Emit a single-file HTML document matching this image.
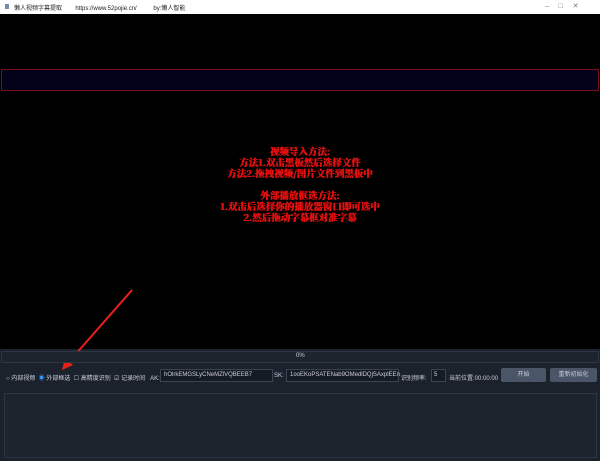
<!DOCTYPE html><html><head><meta charset="utf-8"><style>
body{margin:0;width:600px;height:461px;overflow:hidden;background:#1b222c;font-family:"Liberation Sans","Noto Sans CJK SC",sans-serif;position:relative}
.a{position:absolute}
.t{font-size:6px;color:#ccd;}
</style></head><body>
<div class="a" style="left:0;top:0;width:600px;height:14px;background:#fff"></div>
<div class="a" style="left:5px;top:4px;width:4px;height:5px;background:#7788aa"></div>
<div class="a" style="left:14px;top:3px;font-size:6px;color:#222;white-space:nowrap">懒人视频字幕提取&nbsp;&nbsp;&nbsp;&nbsp;&nbsp;&nbsp;&nbsp;&nbsp;https://www.52pojie.cn/&nbsp;&nbsp;&nbsp;&nbsp;&nbsp;&nbsp;&nbsp;&nbsp;&nbsp;&nbsp;by:懒人智能</div>
<div class="a" style="left:545px;top:2px;font-size:7px;color:#777">–&nbsp;&nbsp;&nbsp;&nbsp;&nbsp;□&nbsp;&nbsp;&nbsp;&nbsp;&nbsp;✕</div>
<div class="a" style="left:0;top:14px;width:600px;height:335px;background:#000"></div>
<div class="a" style="left:1px;top:69px;width:596px;height:20px;border:1px solid #7a0d1c;background:#02031a"></div>
<div class="a" style="left:0;top:146px;width:600px;text-align:center;color:#e01010;font-weight:bold;font-family:'Noto Serif CJK SC',serif;font-size:9.5px;line-height:11px;text-shadow:0.5px 0 0 #e01010,-0.3px 0 0 #e01010">视频导入方法:<br>方法1.双击黑板然后选择文件<br>方法2.拖拽视频/图片文件到黑板中<br><br>外部播放框选方法:<br>1.双击后选择你的播放器窗口即可选中<br>2.然后拖动字幕框对准字幕</div>
<svg class="a" style="left:60px;top:288px" width="75" height="84"><line x1="72" y1="2" x2="7" y2="76" stroke="#e8201a" stroke-width="2"/><polygon points="2,82 5,70 13,77" fill="#e8201a"/></svg>
<div class="a" style="left:1px;top:351px;width:596px;height:10px;border:1px solid #2d3744;background:#1d242e"></div>
<div class="a t" style="left:296px;top:353px">0%</div>
<div class="a t" style="left:6px;top:373px;white-space:nowrap">○ 内部视频&nbsp;&nbsp;<span style="color:#39f">◉</span> 外部框选&nbsp;&nbsp;☐ 高精度识别&nbsp;&nbsp;☑ 记录时间&nbsp;&nbsp;&nbsp;AK:</div>
<div class="a t" style="left:160px;top:369px;width:108px;height:11px;border:1px solid #3a4452;background:#151b23;line-height:11px;padding-left:3px">hOlrkEMGSLyCNeMZlVQBEEB7</div>
<div class="a t" style="left:274px;top:373px">SK:</div>
<div class="a t" style="left:286px;top:369px;width:108px;height:11px;border:1px solid #3a4452;background:#151b23;line-height:11px;padding-left:3px">1ooEKoPSATENab9OMedlDQjSAxplEEn</div>
<div class="a t" style="left:401px;top:373px">识别频率:</div>
<div class="a t" style="left:431px;top:369px;width:11px;height:11px;border:1px solid #3a4452;background:#151b23;line-height:11px;padding-left:2px">5</div>
<div class="a t" style="left:449px;top:373px">当前位置:00:00:00</div>
<div class="a t" style="left:501px;top:368px;width:45px;height:14px;background:#4a5568;border-radius:2px;text-align:center;line-height:14px">开始</div>
<div class="a t" style="left:550px;top:368px;width:47px;height:14px;background:#4a5568;border-radius:2px;text-align:center;line-height:14px">重新初始化</div>
<div class="a" style="left:4px;top:393px;width:591px;height:63px;border:1px solid #2d3744;background:#1d242e"></div>
</body></html>
